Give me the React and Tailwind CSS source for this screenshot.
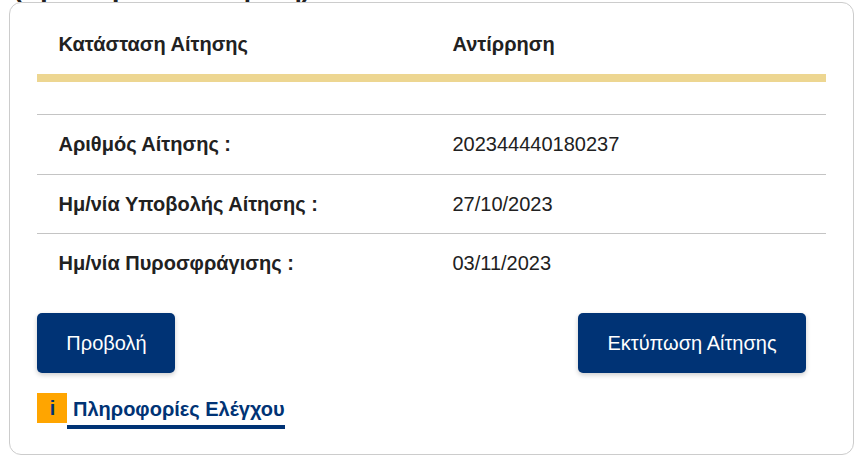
const rows = [
  { label: "Αριθμός Αίτησης :", value: "202344440180237" },
  { label: "Ημ/νία Υποβολής Αίτησης :", value: "27/10/2023" },
  { label: "Ημ/νία Πυροσφράγισης :", value: "03/11/2023" },
];

const Button = ({ className, children }) => (
  <button
    className={`h-[60px] rounded-[5px] bg-[#003375] text-center text-white whitespace-nowrap shadow-[0_2px_5px_rgba(0,0,0,0.2)] ${className}`}
  >
    {children}
  </button>
);

const App = () => {
  return (
    <div className="h-[459px] overflow-hidden bg-white font-['Liberation_Sans',Arial,sans-serif] text-[20px] leading-[30px] text-[#212121]">
      {/* Tail of the section title that scrolls out above the card */}
      <div className="flex h-[2px] items-end overflow-hidden pl-[13px]">
        <h2 className="h-[27px] text-[26px] leading-[26px] font-bold whitespace-nowrap">
          (Προσωρινά Κλεισμένη)
        </h2>
      </div>

      <div className="mr-[11px] ml-[9px] h-[453px] rounded-[12px] border border-[#cccccc] bg-white px-[27px]">
        {/* STATUS */}
        <div className="flex h-[79px] border-b-8 border-[#edd691] pt-[26px] pl-[21.5px] font-bold">
          <div className="w-[394px]">Κατάσταση Αίτησης</div>
          <div>Αντίρρηση</div>
        </div>

        {/* DETAILS */}
        <div className="mt-8">
          {rows.map((row) => (
            <div
              key={row.label}
              className="flex h-[59.5px] items-center border-t border-[#c4c4c4] pl-[21.5px]"
            >
              <div className="w-[394px] font-bold">{row.label}</div>
              <div>{row.value}</div>
            </div>
          ))}
        </div>

        {/* ACTIONS */}
        <div className="mt-5 flex justify-between pr-5">
          <Button className="w-[138px] pl-px">Προβολή</Button>
          <Button className="w-[228px]">Εκτύπωση Αίτησης</Button>
        </div>

        <div className="mt-5 flex items-start font-bold text-[#003375]">
          <span className="size-[30px] bg-[#ffa500] pl-px text-center">i</span>
          <a className="h-9 border-b-4 border-[#003375] pt-px pl-1.5 whitespace-nowrap">
            Πληροφορίες Ελέγχου
          </a>
        </div>
      </div>
    </div>
  );
};

export default App;
